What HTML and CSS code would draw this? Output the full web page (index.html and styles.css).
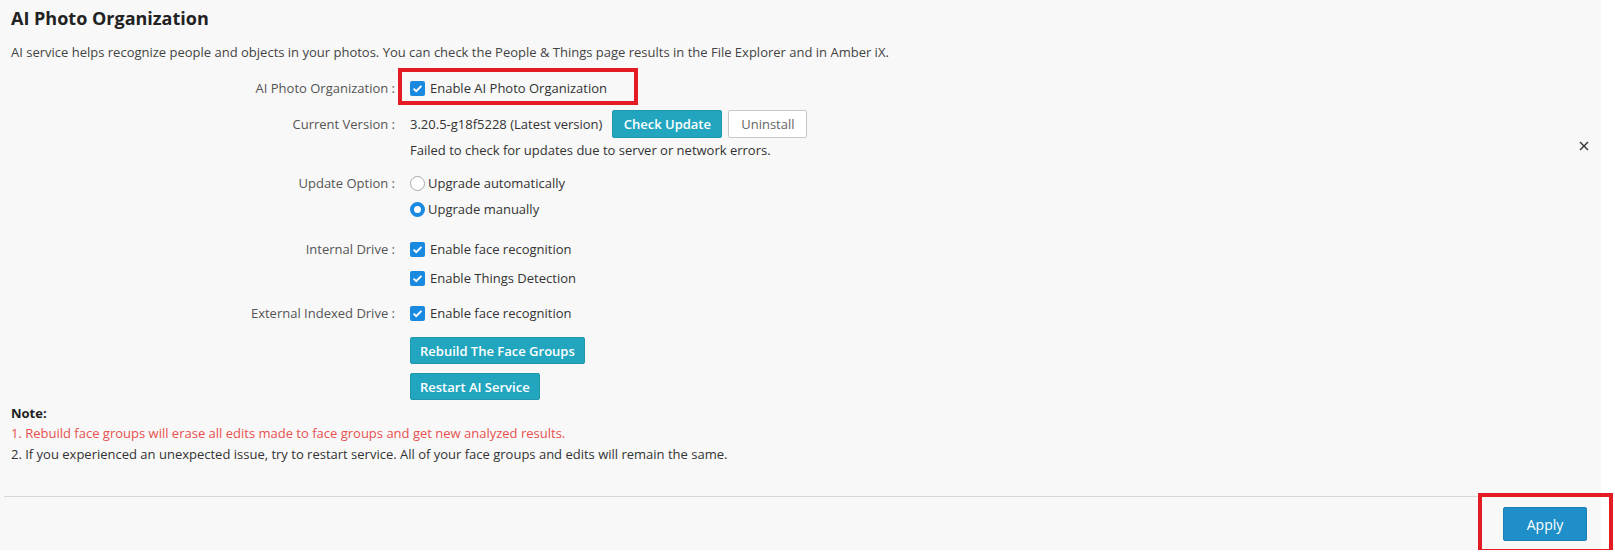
FILE: index.html
```html
<!DOCTYPE html>
<html lang="en">
<head>
    <meta charset="UTF-8">
    <meta name="viewport" content="width=device-width, initial-scale=1.0">
    <title>AI Photo Organization</title>
    <link rel="stylesheet" href="styles.css">
</head>
<body>
    <div class="panel">
        <h2 class="title">AI Photo Organization</h2>
        <p class="desc">AI service helps recognize people and objects in your photos. You can check the People &amp; Things page results in the File Explorer and in Amber iX.</p>

        <div class="form">
            <div class="row row-main">
                <span class="lbl">AI Photo Organization :</span>
                <label class="check mark">
                    <span class="box"><svg viewBox="0 0 16 16" width="15" height="15"><path d="M3.8 8.2l2.8 2.7 5.6-5.8" fill="none" stroke="#fff" stroke-width="2"/></svg></span>
                    Enable AI Photo Organization
                    <span class="annot annot-check"></span>
                </label>
            </div>
            <div class="row row-version">
                <span class="lbl">Current Version :</span>
                <span class="value">3.20.5-g18f5228 (Latest version)</span>
                <button class="btn btn-teal btn-check">Check Update</button>
                <button class="btn btn-plain">Uninstall</button>
            </div>
            <div class="row row-failed">
                <span class="lbl"></span>
                <span class="value">Failed to check for updates due to server or network errors.</span>
            </div>
            <div class="row row-upd1">
                <span class="lbl">Update Option :</span>
                <label class="radio"><span class="dot"></span>Upgrade automatically</label>
            </div>
            <div class="row row-upd2">
                <span class="lbl"></span>
                <label class="radio"><span class="dot on"></span>Upgrade manually</label>
            </div>
            <div class="row row-int1">
                <span class="lbl">Internal Drive :</span>
                <label class="check">
                    <span class="box"><svg viewBox="0 0 16 16" width="15" height="15"><path d="M3.8 8.2l2.8 2.7 5.6-5.8" fill="none" stroke="#fff" stroke-width="2"/></svg></span>
                    Enable face recognition
                </label>
            </div>
            <div class="row row-int2">
                <span class="lbl"></span>
                <label class="check">
                    <span class="box"><svg viewBox="0 0 16 16" width="15" height="15"><path d="M3.8 8.2l2.8 2.7 5.6-5.8" fill="none" stroke="#fff" stroke-width="2"/></svg></span>
                    Enable Things Detection
                </label>
            </div>
            <div class="row row-ext">
                <span class="lbl">External Indexed Drive :</span>
                <label class="check">
                    <span class="box"><svg viewBox="0 0 16 16" width="15" height="15"><path d="M3.8 8.2l2.8 2.7 5.6-5.8" fill="none" stroke="#fff" stroke-width="2"/></svg></span>
                    Enable face recognition
                </label>
            </div>
            <div class="row row-rebuild">
                <span class="lbl"></span>
                <button class="btn btn-teal btn-wide">Rebuild The Face Groups</button>
            </div>
            <div class="row row-restart">
                <span class="lbl"></span>
                <button class="btn btn-teal btn-wide">Restart AI Service</button>
            </div>
        </div>

        <div class="note">
            <p class="note-title">Note:</p>
            <p class="note-warn">1. Rebuild face groups will erase all edits made to face groups and get new analyzed results.</p>
            <p class="note-line">2. If you experienced an unexpected issue, try to restart service. All of your face groups and edits will remain the same.</p>
        </div>

        <button class="close" aria-label="Close">
            <svg viewBox="0 0 10 10" width="10" height="10"><path d="M1 1l8 8M9 1l-8 8" stroke="#333" stroke-width="1.4"/></svg>
        </button>

        <div class="footer">
            <div class="apply-wrap">
                <button class="btn btn-apply">Apply</button>
                <span class="annot annot-apply"></span>
            </div>
        </div>
    </div>
</body>
</html>
```

FILE: styles.css
```css
body {
    margin: 0;
    background: #fff;
    font-family: "Open Sans", "Noto Sans", sans-serif;
    font-size: 13px;
    color: #333;
}
.panel {
    position: relative;
    width: 1601px;
    height: 550px;
    background: #f8f8f8;
    box-sizing: border-box;
    padding: 6px 0 0 11px;
}
.title {
    margin: 0;
    font-size: 18px;
    line-height: 24px;
    font-weight: 700;
    color: #222;
}
.desc {
    margin: 12px 0 0;
    line-height: 20px;
    color: #444;
}
.row {
    display: flex;
    align-items: center;
    height: 20px;
}
.lbl {
    width: 384px;
    flex: none;
    text-align: right;
    color: #555;
    margin-right: 15px;
}
.value {
    color: #333;
}
.row-main { height: 28px; margin-top: 12px; }
.row-version { height: 28px; margin-top: 8px; }
.row-failed { margin-top: 2px; }
.row-upd1 { margin-top: 13px; }
.row-upd2 { margin-top: 6px; }
.row-int1 { margin-top: 20px; }
.row-int2 { margin-top: 9px; }
.row-ext { margin-top: 15px; }
.row-rebuild { height: 27px; margin-top: 14px; }
.row-restart { height: 27px; margin-top: 9px; }

.check {
    position: relative;
    display: flex;
    align-items: center;
    gap: 5px;
    color: #333;
    height: 20px;
}
.box {
    width: 15px;
    height: 15px;
    border-radius: 2px;
    background: #1a8ae0;
    display: flex;
}
.radio {
    display: flex;
    align-items: center;
    gap: 3px;
    color: #333;
}
.dot {
    width: 13px;
    height: 13px;
    border-radius: 50%;
    border: 1px solid #a8a8a8;
    background: #fff;
}
.dot.on {
    width: 7px;
    height: 7px;
    border: 4px solid #1a8ae0;
}
.annot {
    position: absolute;
    border: 4px solid #e41b23;
    pointer-events: none;
}
.annot-check {
    left: -12px;
    top: -10px;
    right: -31px;
    bottom: -7px;
}

.btn {
    font-family: inherit;
    font-size: 13px;
    border-radius: 2px;
    cursor: pointer;
    padding: 0 9px;
    white-space: nowrap;
}
.btn-teal {
    background: #22a6bf;
    border: 1px solid #1f98ae;
    color: #fff;
    font-weight: 600;
}
.btn-check {
    height: 28px;
    width: 110px;
    padding: 0;
    margin-left: 10px;
}
.btn-plain {
    height: 28px;
    width: 79px;
    padding: 0;
    margin-left: 6px;
    background: #fff;
    border: 1px solid #c8c8c8;
    color: #666;
}
.btn-wide {
    height: 27px;
}

.note {
    margin-top: 3px;
}
.note p {
    margin: 0;
    line-height: 21px;
}
.note .note-title {
    line-height: 20px;
    font-weight: 700;
    color: #222;
}
.note-warn {
    color: #e8504f;
}
.note-line {
    color: #333;
}

.close {
    position: absolute;
    left: 1579px;
    top: 141px;
    width: 10px;
    height: 10px;
    padding: 0;
    border: none;
    background: none;
    display: flex;
}

.footer {
    margin: 31px 0 0 -7px;
    border-top: 1px solid #d8d8d8;
    padding: 10px 14px 0 0;
    display: flex;
    justify-content: flex-end;
}
.apply-wrap {
    position: relative;
}
.btn-apply {
    width: 84px;
    height: 34px;
    padding: 0;
    background: #1e8fc8;
    border: 1px solid #1b80b3;
    color: #fff;
    font-size: 14px;
}
.annot-apply {
    left: -25px;
    top: -14px;
    right: -26px;
    bottom: -12px;
}
```
